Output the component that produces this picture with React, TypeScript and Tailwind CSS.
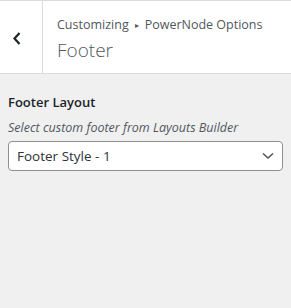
import React from "react";

export default function App() {
  return (
    <div className="w-[291px] h-[308px] bg-[#f0f0f1] overflow-hidden" style={{ fontFamily: '"Open Sans", "Noto Sans", sans-serif' }}>
      <div className="flex h-[74px] bg-white border-t border-b border-[#dcdcde]">
        <div className="w-[43px] flex items-center pl-[13px] border-r border-[#dcdcde] pt-[2px]">
          <svg width="8" height="13" viewBox="0 0 8 13" fill="none">
            <path d="M6.5 1 L1.5 6.5 L6.5 12" stroke="#1d2327" strokeWidth="2.2" />
          </svg>
        </div>
        <div className="flex flex-col justify-center pl-[14px] pt-[4px]">
          <div className="text-[12.5px] leading-[20px] text-[#50575e] flex items-center">
            Customizing
            <span className="text-[8px] mx-[6px]">▸</span>
            PowerNode Options
          </div>
          <div className="text-[19px] leading-[28px] font-light text-[#50575e] mt-[1px]">Footer</div>
        </div>
      </div>
      <div className="px-[8px] pt-[16px]">
        <div className="text-[13px] leading-[24px] font-semibold text-[#1d2327]">Footer Layout</div>
        <div className="text-[12.5px] leading-[20px] italic text-[#50575e] mt-[4px]">Select custom footer from Layouts Builder</div>
        <div className="mt-[3px] h-[30px] bg-white border border-[#8c8f94] rounded-[4px] flex items-center justify-between pl-[8px] pr-[8px]">
          <span className="text-[13.5px] text-[#2c3338]">Footer Style - 1</span>
          <svg width="12" height="8" viewBox="0 0 12 8" fill="none">
            <path d="M1 1.5 L6 6 L11 1.5" stroke="#50575e" strokeWidth="1.6" />
          </svg>
        </div>
      </div>
    </div>
  );
}
